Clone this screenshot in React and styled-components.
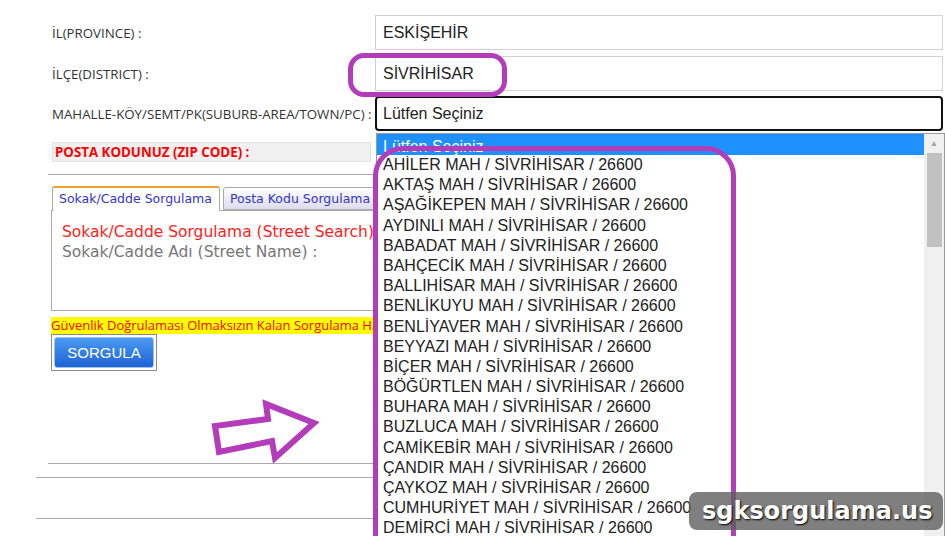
import React from "react";
import styled, { createGlobalStyle } from "styled-components";

const GlobalStyle = createGlobalStyle`
  html, body { margin: 0; padding: 0; background: #fff; }
  body { font-family: "Open Sans", "Liberation Sans", sans-serif; }
`;

const Page = styled.div`
  position: relative;
  width: 945px;
  height: 536px;
  overflow: hidden;
  padding-top: 15px;
  box-sizing: border-box;
`;

const FieldRow = styled.div`
  display: grid;
  grid-template-columns: 375px 568px;
  align-items: center;
  height: 35px;
  margin-bottom: ${(p) => p.gap || 6}px;
`;

const Label = styled.div`
  padding-left: 52px;
  font-size: 13.3px;
  color: #333;
  white-space: nowrap;
`;

const Field = styled.div`
  position: relative;
  height: 35px;
  box-sizing: border-box;
  border: 1px solid #d2d2d2;
  display: flex;
  align-items: center;
  padding-left: 7px;
  font-family: "Liberation Sans", Arial, sans-serif;
  font-size: 16px;
  color: #222;
`;

const Select = styled(Field)`
  border: 2px solid #111;
  border-radius: 4px;
  padding-left: 6px;
`;

const ZipRow = styled.div`
  margin: 11px 0 0 52px;
  width: 319px;
  height: 20px;
  box-sizing: border-box;
  background: #f0f0f0;
  border: 1px solid #e2e2e2;
  color: #f00;
  font-weight: 700;
  font-size: 13.3px;
  line-height: 18px;
  padding-left: 2px;
  white-space: nowrap;
`;

const Rule = styled.div`
  margin: ${(p) => p.top}px 0 0 ${(p) => p.left}px;
  border-top: 1px solid #aaa;
`;

const TabBar = styled.div`
  display: flex;
  gap: 3px;
  margin: 11px 0 0 52px;
  height: 24px;
`;

const Tab = styled.div`
  box-sizing: border-box;
  height: ${(p) => (p.active ? 25 : 23)}px;
  margin-top: ${(p) => (p.active ? 0 : 1)}px;
  padding: 0 7px 0 6px;
  border: 1px solid #aaa;
  border-top: ${(p) => (p.active ? "2px solid #f0a030" : "1px solid #aaa")};
  border-bottom: ${(p) => (p.active ? "none" : "1px solid #aaa")};
  border-radius: 3px 3px 0 0;
  background: ${(p) => (p.active ? "#fff" : "linear-gradient(#ffffff, #dcdcee)")};
  font-family: "DejaVu Sans", Verdana, sans-serif;
  font-size: 12.5px;
  line-height: 21px;
  color: #3434c8;
  white-space: nowrap;
  position: relative;
  z-index: 1;
`;

const Panel = styled.div`
  margin-left: 51px;
  height: 101px;
  box-sizing: border-box;
  border: 1px solid #aaa;
  padding: 11px 0 0 10px;
  font-family: "DejaVu Sans", Verdana, sans-serif;
  font-size: 15.5px;
  line-height: 20px;
`;

const PanelLine = styled.div`
  color: ${(p) => p.color};
  white-space: nowrap;
`;

const Warning = styled.div`
  margin: 6px 0 0 51px;
  width: 324px;
  height: 17px;
  background: #ffff00;
  color: #f00;
  font-size: 13px;
  line-height: 17px;
  white-space: nowrap;
  overflow: hidden;
`;

const ButtonFrame = styled.div`
  margin-left: 51px;
  width: 106px;
  height: 37px;
  box-sizing: border-box;
  border: 1px solid #8a8a8a;
  padding: 2px;
`;

const Button = styled.div`
  height: 100%;
  box-sizing: border-box;
  border: 1px solid #9cc4f4;
  border-radius: 3px;
  background: linear-gradient(#4a9af2, #1f62d4);
  color: #fff;
  font-family: "Liberation Sans", Arial, sans-serif;
  font-size: 15px;
  display: flex;
  align-items: center;
  justify-content: center;
`;

const Dropdown = styled.div`
  position: absolute;
  left: -1px;
  top: 35px;
  width: 569px;
  height: 420px;
  box-sizing: border-box;
  border: 1px solid #9a9a9a;
  background: #fff;
  display: flex;
  z-index: 5;
  font-family: "Liberation Sans", Arial, sans-serif;
  font-size: 16px;
  color: #222;
`;

const Options = styled.div`
  flex: 1;
  overflow: hidden;
`;

const Option = styled.div`
  height: ${(p) => (p.selected ? 21 : 20.2)}px;
  line-height: ${(p) => (p.selected ? 25 : 20)}px;
  padding-left: 6px;
  white-space: nowrap;
  overflow: hidden;
  background: ${(p) => (p.selected ? "#1e90ff" : "transparent")};
  color: ${(p) => (p.selected ? "#fff" : "#222")};
`;

const Scrollbar = styled.div`
  width: 20px;
  background: #f0f0f0;
  display: flex;
  flex-direction: column;
  align-items: center;
`;

const ScrollArrow = styled.div`
  height: 19px;
  display: flex;
  align-items: center;
  justify-content: center;
  color: #a0a0a0;
  font-size: 8px;
`;

const Thumb = styled.div`
  width: 15px;
  height: 94px;
  background: #c1c1c1;
`;

const Mark = styled.div`
  position: absolute;
  left: ${(p) => p.x}px;
  top: ${(p) => p.y}px;
  width: ${(p) => p.w}px;
  height: ${(p) => p.h}px;
  box-sizing: border-box;
  border: 5px solid #b23cb9;
  border-radius: ${(p) => p.r}px;
  z-index: 8;
  pointer-events: none;
`;

const Arrow = styled.svg`
  position: absolute;
  left: 205px;
  top: 395px;
  z-index: 8;
`;

const Watermark = styled.div`
  position: absolute;
  left: 689px;
  top: 492px;
  width: 254px;
  height: 38px;
  border-radius: 8px;
  background: rgba(95, 95, 95, 0.8);
  color: #fff;
  font-family: "DejaVu Sans", sans-serif;
  font-weight: 700;
  font-size: 24px;
  line-height: 38px;
  padding-left: 13px;
  box-sizing: border-box;
  text-shadow: 1px 1px 2px #000;
  z-index: 10;
`;

const places = [
  "AHİLER",
  "AKTAŞ",
  "AŞAĞİKEPEN",
  "AYDINLI",
  "BABADAT",
  "BAHÇECİK",
  "BALLIHİSAR",
  "BENLİKUYU",
  "BENLİYAVER",
  "BEYYAZI",
  "BİÇER",
  "BÖĞÜRTLEN",
  "BUHARA",
  "BUZLUCA",
  "CAMİKEBİR",
  "ÇANDIR",
  "ÇAYKOZ",
  "CUMHURİYET",
  "DEMİRCİ",
];

export default function App() {
  return (
    <Page>
      <GlobalStyle />
      <FieldRow>
        <Label>İL(PROVINCE) :</Label>
        <Field>ESKİŞEHİR</Field>
      </FieldRow>
      <FieldRow gap={5}>
        <Label>İLÇE(DISTRICT) :</Label>
        <Field>SİVRİHİSAR</Field>
      </FieldRow>
      <FieldRow gap={0}>
        <Label>MAHALLE-KÖY/SEMT/PK(SUBURB-AREA/TOWN/PC) :</Label>
        <Select>
          Lütfen Seçiniz
          <Dropdown>
            <Options>
              <Option selected>Lütfen Seçiniz</Option>
              {places.map((p) => (
                <Option key={p}>{p} MAH / SİVRİHİSAR / 26600</Option>
              ))}
            </Options>
            <Scrollbar>
              <ScrollArrow>▲</ScrollArrow>
              <Thumb />
            </Scrollbar>
          </Dropdown>
        </Select>
      </FieldRow>

      <ZipRow>POSTA KODUNUZ (ZIP CODE) :</ZipRow>
      <Rule top={12} left={48} />

      <TabBar>
        <Tab active>Sokak/Cadde Sorgulama</Tab>
        <Tab>Posta Kodu Sorgulama</Tab>
      </TabBar>
      <Panel>
        <PanelLine color="#f22">Sokak/Cadde Sorgulama (Street Search)</PanelLine>
        <PanelLine color="#777">Sokak/Cadde Adı (Street Name) :</PanelLine>
      </Panel>
      <Warning>Güvenlik Doğrulaması Olmaksızın Kalan Sorgulama Ha</Warning>
      <ButtonFrame>
        <Button>SORGULA</Button>
      </ButtonFrame>

      <Rule top={92} left={48} />
      <Rule top={13} left={36} />
      <Rule top={40} left={36} />

      <Mark x={348} y={53} w={159} h={44} r={16} />
      <Mark x={373} y={146} w={363} h={420} r={30} />
      <Arrow width="120" height="75" viewBox="205 395 120 75">
        <polygon
          points="215,426 219,452 272,441 275,458 314,423 266,404 268,419"
          fill="none"
          stroke="#b23cb9"
          strokeWidth="6"
          strokeLinejoin="miter"
        />
      </Arrow>
      <Watermark>sgksorgulama.us</Watermark>
    </Page>
  );
}
